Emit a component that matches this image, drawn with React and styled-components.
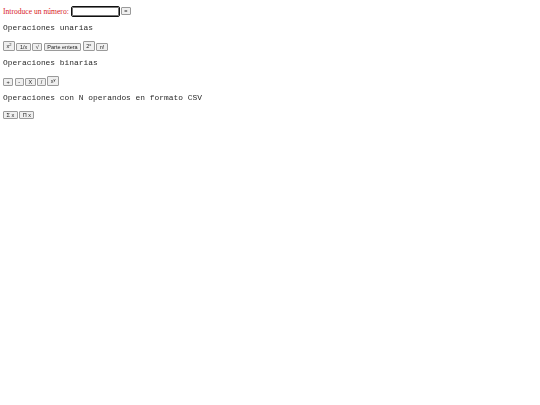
import React, { useEffect, useRef } from "react";
import styled, { createGlobalStyle } from "styled-components";

const GlobalStyle = createGlobalStyle`
  html, body {
    margin: 0;
    background: #fff;
  }
`;

const Page = styled.div`
  display: flex;
  flex-direction: column;
  align-items: flex-start;
  padding: 6px 3px;
`;

const InputRow = styled.div`
  display: flex;
  align-items: center;
  gap: 2px;
  height: 10px;
`;

const Label = styled.label`
  font-family: "Liberation Serif", serif;
  font-size: 7.6px;
  color: #d8231f;
  margin-right: 1px;
`;

const NumberInput = styled.input`
  box-sizing: border-box;
  width: 47px;
  height: 9px;
  padding: 0 2px;
  font-size: 6px;
  border: 1px solid #767676;
  border-radius: 1px;
  outline: 1px solid #101010;
  outline-offset: 0;
`;

const Heading = styled.p`
  font-family: "Liberation Mono", monospace;
  font-size: 7.9px;
  line-height: 10px;
  color: #2a2a2a;
  margin: 7px 0 8px;
  white-space: pre;
`;

const ButtonRow = styled.div`
  display: flex;
  align-items: flex-end;
  gap: 1.5px;
`;

const OpButton = styled.button`
  box-sizing: border-box;
  font-family: "Liberation Sans", Arial, sans-serif;
  font-size: 5.5px;
  line-height: 6px;
  color: #222;
  min-width: ${(props) => (props.wide ? "10px" : "8px")};
  height: ${(props) => (props.tall ? "10px" : "8px")};
  padding: 0 2.5px;
  background: #efefef;
  border: 1px solid #9a9a9a;
  border-radius: 1px;
  display: flex;
  align-items: center;
  justify-content: center;

  sup {
    font-size: 4px;
    line-height: 0;
    position: relative;
    top: -1px;
  }
`;

export default function App() {
  const inputRef = useRef(null);
  useEffect(() => {
    inputRef.current && inputRef.current.focus();
  }, []);

  return (
    <>
      <GlobalStyle />
      <Page>
        <InputRow>
          <Label htmlFor="num">Introduce un número:</Label>
          <NumberInput id="num" ref={inputRef} type="text" />
          <OpButton>=</OpButton>
        </InputRow>

        <Heading>Operaciones unarias</Heading>
        <ButtonRow>
          <OpButton tall wide>
            x<sup>2</sup>
          </OpButton>
          <OpButton wide>1/x</OpButton>
          <OpButton wide>√</OpButton>
          <OpButton>Parte entera</OpButton>
          <OpButton tall wide>
            2<sup>x</sup>
          </OpButton>
          <OpButton wide>n!</OpButton>
        </ButtonRow>

        <Heading>Operaciones binarias</Heading>
        <ButtonRow>
          <OpButton>+</OpButton>
          <OpButton>-</OpButton>
          <OpButton>X</OpButton>
          <OpButton>/</OpButton>
          <OpButton tall wide>
            x<sup>y</sup>
          </OpButton>
        </ButtonRow>

        <Heading>Operaciones con N operandos en formato CSV</Heading>
        <ButtonRow>
          <OpButton>Σ x</OpButton>
          <OpButton>Π x</OpButton>
        </ButtonRow>
      </Page>
    </>
  );
}
